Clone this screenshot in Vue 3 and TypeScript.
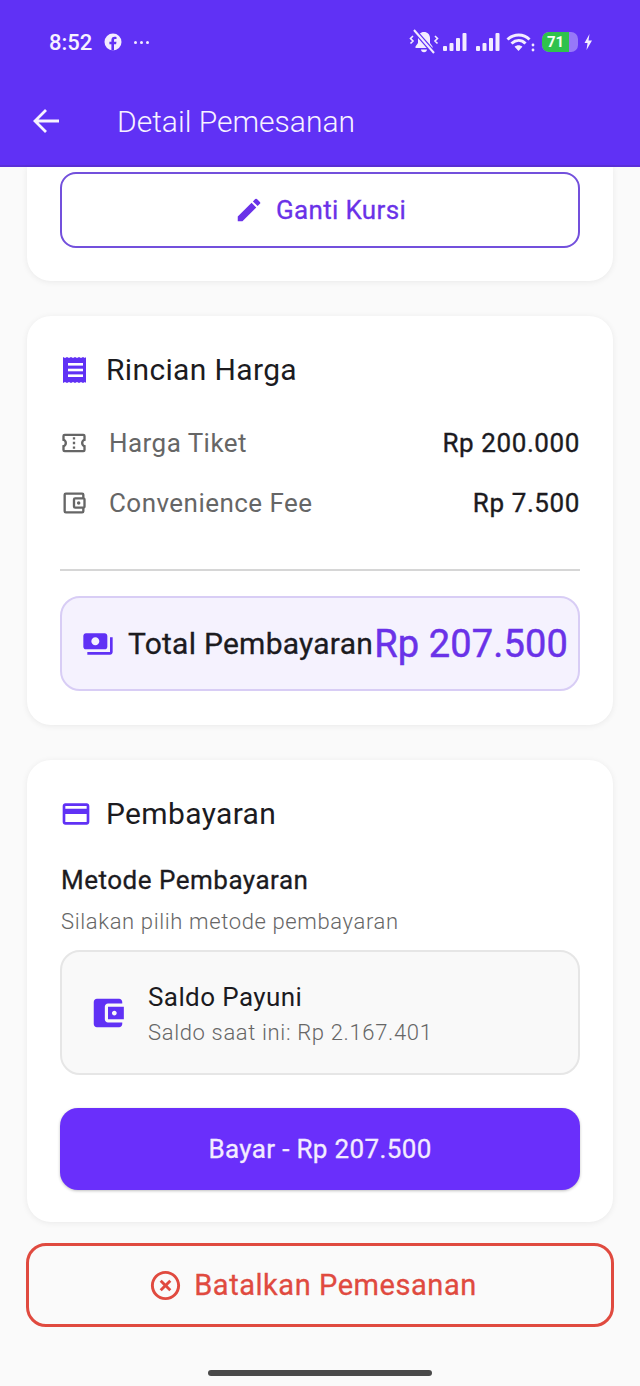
<script setup lang="ts">
interface PriceRow {
  label: string
  value: string
  icon: 'ticket' | 'wallet'
}

const priceRows: PriceRow[] = [
  { label: 'Harga Tiket', value: 'Rp 200.000', icon: 'ticket' },
  { label: 'Convenience Fee', value: 'Rp 7.500', icon: 'wallet' },
]
</script>

<template>
  <div class="page">
    <header class="appbar">
      <div class="statusbar">
        <div class="status-left">
          <span class="clock">8:52</span>
          <svg class="fb" viewBox="0 0 18 18" width="18" height="18">
            <circle cx="9" cy="9" r="8.500" fill="#f3ecff" />
            <path d="M10 17.500v-6.200h2.100l.4-2.500H10V7.300c0-.8.3-1.200 1.200-1.200h1.300V4c-.5-.1-1.200-.2-1.900-.2-2 0-3.200 1.200-3.200 3.300v1.700H5.400v2.500h2v6.200z" fill="#6031f5" />
          </svg>
          <span class="dots"><i></i><i></i><i></i></span>
        </div>
        <div class="status-right">
          <svg class="bell" viewBox="0 0 30 26" width="30" height="26" fill="#f3ecff">
            <path d="M15 3c-3.500 0-6 2.600-6 6v5l-2.500 3.500V19h17v-1.500L21 14V9c0-3.400-2.500-6-6-6zM12 20.500h6c0 1.600-1.300 2.700-3 2.700s-3-1.100-3-2.700z" />
            <path d="M5 1 25 24" stroke="#6031f5" stroke-width="4.500" />
            <path d="M5 1 25 24" stroke="#f3ecff" stroke-width="2" />
            <path d="M4 7 1.500 9.500 4 12 1.500 14.500M26 7l2.500 2.500L26 12l2.500 2.500" fill="none" stroke="#f3ecff" stroke-width="1.600" />
          </svg>
          <svg v-for="n in 2" :key="n" class="signal" viewBox="0 0 26 20" width="26" height="20" fill="#f3ecff">
            <rect x="1" y="14" width="4" height="5" rx="1" />
            <rect x="7.500" y="11" width="4" height="8" rx="1" />
            <rect x="14" y="6" width="4" height="13" rx="1" />
            <rect x="20.500" y="1" width="4" height="18" rx="1" />
          </svg>
          <svg class="wifi" viewBox="0 0 30 20" width="30" height="20" fill="none" stroke="#f3ecff" stroke-width="3">
            <path d="M1.500 7.500c6.500-6 16-6 22 0" />
            <path d="M5.500 11.500c4.500-4 10-4 14 0" />
            <path d="M12.500 19 8.600 14.800c2.200-2 5.700-2 7.800 0z" fill="#f3ecff" stroke="none" />
            <circle cx="27" cy="13" r="1.400" fill="#f3ecff" stroke="none" />
            <circle cx="27" cy="18" r="1.400" fill="#f3ecff" stroke="none" />
          </svg>
          <div class="battery">
            <div class="battery-fill">71</div>
          </div>
          <svg viewBox="0 0 10 18" width="10" height="18" fill="#f3ecff">
            <path d="M6.500 1 1.500 10h3l-1 7 5.500-9.500H5.500z" />
          </svg>
        </div>
      </div>
      <div class="toolbar">
        <svg viewBox="0 0 28 28" width="28" height="28" fill="none" stroke="#f7f2ff" stroke-width="2.800">
          <path d="M27 14H3M14 3 3 14l11 11" />
        </svg>
        <h1>Detail Pemesanan</h1>
      </div>
    </header>

    <main class="content">
      <section class="card card-cut">
        <button class="btn-outline">
          <svg viewBox="0 0 24 24" width="30" height="30" fill="#6a32e8">
            <path d="M3 17.250V21h3.750L17.810 9.940l-3.750-3.750L3 17.250zM20.710 7.040a1 1 0 0 0 0-1.410l-2.340-2.340a1 1 0 0 0-1.410 0l-1.830 1.830 3.750 3.750 1.830-1.830z" />
          </svg>
          <span>Ganti Kursi</span>
        </button>
      </section>

      <section class="card card-price">
        <div class="card-title">
          <svg viewBox="0 0 25 26" width="25" height="26" class="receipt" fill="#6031f5">
            <path d="M0 0l2 1 2-1 2 1 2-1 2 1 2-1 2 1 2-1 2 1 2-1 2 1 1-1v26l-1-1-2 1-2-1-2 1-2-1-2 1-2-1-2 1-2-1-2 1-2-1-2 1z" />
            <rect x="5" y="6" width="15" height="2.600" fill="#fff" />
            <rect x="5" y="11.700" width="15" height="2.600" fill="#fff" />
            <rect x="5" y="17.400" width="15" height="2.600" fill="#fff" />
          </svg>
          <h2>Rincian Harga</h2>
        </div>
        <div class="price-rows">
          <div v-for="row in priceRows" :key="row.label" class="price-row">
            <svg v-if="row.icon === 'ticket'" viewBox="0 0 24 24" width="28" height="28" fill="#666">
              <path d="M22 10V6a2 2 0 0 0-2-2H4a2 2 0 0 0-2 2v4a2 2 0 0 1 0 4v4a2 2 0 0 0 2 2h16a2 2 0 0 0 2-2v-4a2 2 0 0 1 0-4zm-2-1.460a4 4 0 0 0 0 6.920V18H4v-2.540a4 4 0 0 0 0-6.920V6h16v2.540zM11 15h2v2h-2zm0-4h2v2h-2zm0-4h2v2h-2z" />
            </svg>
            <svg v-else viewBox="0 0 24 24" width="28" height="28" fill="#666">
              <path d="M21 7.280V5a2 2 0 0 0-2-2H5a2 2 0 0 0-2 2v14a2 2 0 0 0 2 2h14a2 2 0 0 0 2-2v-2.280A2 2 0 0 0 22 15V9a2 2 0 0 0-1-1.720zM20 9v6h-7V9h7zM5 19V5h14v2h-6a2 2 0 0 0-2 2v6a2 2 0 0 0 2 2h6v2H5z" />
              <circle cx="16" cy="12" r="1.500" />
            </svg>
            <span class="price-label">{{ row.label }}</span>
            <span class="price-value">{{ row.value }}</span>
          </div>
        </div>
        <div class="divider"></div>
        <div class="total">
          <svg viewBox="0 0 24 24" width="32" height="32" fill="#6031f5">
            <path d="M19 14V6c0-1.100-.9-2-2-2H3c-1.100 0-2 .9-2 2v8c0 1.100.9 2 2 2h14c1.100 0 2-.9 2-2zm-9-1c-1.660 0-3-1.340-3-3s1.340-3 3-3 3 1.340 3 3-1.340 3-3 3zm13-6v11c0 1.100-.9 2-2 2H4v-2h17V7h2z" />
          </svg>
          <span class="total-label">Total Pembayaran</span>
          <span class="total-value">Rp 207.500</span>
        </div>
      </section>

      <section class="card card-pay">
        <div class="card-title">
          <svg viewBox="0 0 24 24" width="32" height="32" fill="#6031f5">
            <path d="M20 4H4c-1.110 0-1.990.89-1.990 2L2 18c0 1.110.89 2 2 2h16c1.110 0 2-.89 2-2V6c0-1.110-.89-2-2-2zm0 14H4v-6h16v6zm0-10H4V6h16v2z" />
          </svg>
          <h2>Pembayaran</h2>
        </div>
        <div class="method-title">Metode Pembayaran</div>
        <div class="method-hint">Silakan pilih metode pembayaran</div>
        <div class="method">
          <svg viewBox="0 0 24 24" width="38" height="38" fill="#6031f5">
            <path d="M21 18v1c0 1.100-.9 2-2 2H5c-1.110 0-2-.9-2-2V5c0-1.100.89-2 2-2h14c1.100 0 2 .9 2 2v1h-9c-1.110 0-2 .9-2 2v8c0 1.100.89 2 2 2h9zm-9-2h10V8H12v8zm4-2.500c-.83 0-1.500-.67-1.500-1.500s.67-1.500 1.500-1.500 1.500.67 1.500 1.500-.67 1.500-1.500 1.500z" />
          </svg>
          <div class="method-text">
            <div class="method-name">Saldo Payuni</div>
            <div class="method-balance">Saldo saat ini: Rp 2.167.401</div>
          </div>
        </div>
        <button class="btn-pay">Bayar - Rp 207.500</button>
      </section>

      <button class="btn-cancel">
        <svg viewBox="0 0 24 24" width="35" height="35" fill="#e04a3f">
          <path d="M14.590 8 12 10.590 9.410 8 8 9.410 10.590 12 8 14.590 9.410 16 12 13.410 14.590 16 16 14.590 13.410 12 16 9.410 14.590 8zM12 2C6.470 2 2 6.470 2 12s4.470 10 10 10 10-4.470 10-10S17.530 2 12 2zm0 18c-4.410 0-8-3.590-8-8s3.590-8 8-8 8 3.590 8 8-3.590 8-8 8z" />
        </svg>
        <span>Batalkan Pemesanan</span>
      </button>

      <div class="home-indicator"></div>
    </main>
  </div>
</template>

<style scoped>
.page { width: 640px; height: 1386px; overflow: hidden; background: #fafafa; font-family: Roboto, "Liberation Sans", sans-serif; display: flex; flex-direction: column; }
.appbar { height: 167px; background: #6031f5; color: #f7f2ff; flex-shrink: 0; box-sizing: border-box; border-bottom: 2px solid #5a2fd8; }
.statusbar { height: 84px; padding: 0 47px 0 49px; display: flex; align-items: center; justify-content: space-between; box-sizing: border-box; }
.status-left { display: flex; align-items: center; gap: 12px; }
.clock { font-size: 22px; font-weight: 500; }
.dots { display: flex; gap: 3px; }
.dots i { width: 3px; height: 3px; border-radius: 50%; background: #f3ecff; }
.status-right { display: flex; align-items: center; gap: 1px; }
.bell { margin-right: -4px; }
.signal { margin-left: 6px; }
.wifi { margin-left: 4px; }
.battery { width: 36px; height: 20px; border-radius: 7px; background: rgba(255,255,255,.35); overflow: hidden; margin-left: 5px; margin-right: 4px; }
.battery-fill { width: 27px; height: 20px; background: #2fc24c; border-radius: 6px 0 0 6px; color: #f4fff4; font-size: 15px; font-weight: 700; line-height: 20px; text-align: center; }
.toolbar { display: flex; align-items: center; gap: 57px; padding: 0 0 0 32px; height: 74px; }
.toolbar h1 { margin: 0; font-size: 30px; font-weight: 300; letter-spacing: 0; }

.content { padding: 0 27px; display: flex; flex-direction: column; align-items: stretch; }
.card { background: #fff; border-radius: 0 0 24px 24px; box-shadow: 0 1px 6px rgba(0,0,0,.07); padding: 33px; box-sizing: border-box; }
.card-cut { padding-top: 5px; height: 114px; }
.card-price, .card-pay { border-radius: 24px; margin-top: 35px; }
.card-price { height: 409px; }
.card-pay { height: 462px; }

.btn-outline { width: 100%; height: 76px; border: 2px solid #7350dc; border-radius: 16px; background: #fff; color: #6a32e8; display: flex; align-items: center; justify-content: center; gap: 12px; font: 400 26px Roboto, sans-serif; letter-spacing: .35px; -webkit-text-stroke: .3px #6a32e8; }
.card-title { display: flex; align-items: center; gap: 14px; height: 42px; }
.card-title h2 { margin: 0 0 2px; font-size: 30px; font-weight: 400; color: #1c1b1f; letter-spacing: .35px; }
.receipt { margin: 0 4px 0 3px; }
.price-rows { margin-top: 34px; display: flex; flex-direction: column; gap: 24px; }
.price-row { display: flex; align-items: center; height: 36px; }
.price-label { margin-left: 21px; font-size: 26px; color: #666; letter-spacing: .45px; flex: 1; }
.price-value { font-size: 26px; color: #1c1b1f; letter-spacing: .6px; -webkit-text-stroke: .35px #1c1b1f; }
.divider { height: 2px; background: #d6d6d6; margin-top: 48px; }
.total { margin-top: 25px; height: 95px; box-sizing: border-box; background: #f5f2fe; border: 2px solid #d8cdf5; border-radius: 20px; display: flex; align-items: center; justify-content: flex-start; padding: 0 10px 0 20px; }
.total-label { margin-left: 14px; font-size: 30px; color: #1c1b1f; letter-spacing: .25px; white-space: nowrap; -webkit-text-stroke: .3px #1c1b1f; }
.total-value { margin-left: auto; font-size: 38px; color: #6a32e8; letter-spacing: .15px; white-space: nowrap; -webkit-text-stroke: .5px #6a32e8; }

.method-title { margin: 30px 0 0 1px; font-size: 26px; color: #1c1b1f; letter-spacing: .5px; -webkit-text-stroke: .3px #1c1b1f; }
.method-hint { margin: 14px 0 0 1px; font-size: 22px; font-weight: 300; color: #666; letter-spacing: .63px; }
.method { margin-top: 16px; height: 125px; box-sizing: border-box; border: 2px solid #e6e6e6; border-radius: 20px; background: #f9f9f9; display: flex; align-items: center; padding: 0 0 0 27px; gap: 21px; }
.method-text { margin-top: 2px; }
.method-name { font-size: 26px; color: #1c1b1f; letter-spacing: .4px; }
.method-balance { margin-top: 8px; font-size: 22px; font-weight: 300; color: #666; letter-spacing: .65px; }
.btn-pay { margin-top: 33px; width: 100%; height: 82px; border: 0; border-radius: 18px; background: #6a2ffb; color: #f3ecff; font: 400 26px Roboto, sans-serif; letter-spacing: .35px; -webkit-text-stroke: .3px #f3ecff; box-shadow: 0 1px 3px rgba(0,0,0,.25); }

.btn-cancel { margin: 21px -1px 0; height: 84px; border: 3px solid #e04a3f; border-radius: 20px; background: #fafafa; color: #e04a3f; display: flex; align-items: center; justify-content: center; gap: 11px; padding: 0 15px 0 0; font: 400 29px Roboto, sans-serif; letter-spacing: .55px; -webkit-text-stroke: .3px #e04a3f; }
.home-indicator { width: 224px; height: 6px; border-radius: 3px; background: #4a4a4a; margin: 43px auto 0; }
</style>
